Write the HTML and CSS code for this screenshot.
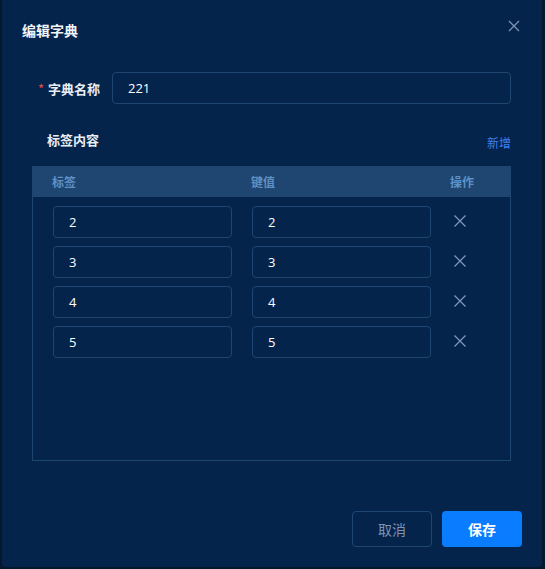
FILE: index.html
```html
<!DOCTYPE html>
<html lang="zh">
<head>
<meta charset="utf-8">
<title>编辑字典</title>
<link rel="stylesheet" href="styles.css">
</head>
<body>
<div class="backdrop">
  <div class="dialog">
    <div class="dialog-header">
      <span class="dialog-title">编辑字典</span>
      <button class="close" aria-label="关闭">
        <svg width="12" height="12" viewBox="0 0 12 12"><path d="M1 1L11 11M11 1L1 11" stroke="currentColor" stroke-width="1.2" fill="none"/></svg>
      </button>
    </div>
    <div class="dialog-body">
      <div class="form-row">
        <label class="form-label"><span class="req">*</span>字典名称</label>
        <div class="input main-input">221</div>
      </div>
      <div class="section-head">
        <span class="section-title">标签内容</span>
        <a class="add-link">新增</a>
      </div>
      <div class="table">
        <div class="table-head">
          <span>标签</span><span>键值</span><span>操作</span>
        </div>
        <div class="table-body">
          <div class="trow"><div class="input">2</div><div class="input">2</div><span class="del"><svg width="12" height="12" viewBox="0 0 12 12"><path d="M0.5 0.5L11.5 11.5M11.5 0.5L0.5 11.5" stroke="currentColor" stroke-width="1.2" fill="none"/></svg></span></div>
          <div class="trow"><div class="input">3</div><div class="input">3</div><span class="del"><svg width="12" height="12" viewBox="0 0 12 12"><path d="M0.5 0.5L11.5 11.5M11.5 0.5L0.5 11.5" stroke="currentColor" stroke-width="1.2" fill="none"/></svg></span></div>
          <div class="trow"><div class="input">4</div><div class="input">4</div><span class="del"><svg width="12" height="12" viewBox="0 0 12 12"><path d="M0.5 0.5L11.5 11.5M11.5 0.5L0.5 11.5" stroke="currentColor" stroke-width="1.2" fill="none"/></svg></span></div>
          <div class="trow"><div class="input">5</div><div class="input">5</div><span class="del"><svg width="12" height="12" viewBox="0 0 12 12"><path d="M0.5 0.5L11.5 11.5M11.5 0.5L0.5 11.5" stroke="currentColor" stroke-width="1.2" fill="none"/></svg></span></div>
        </div>
      </div>
    </div>
    <div class="dialog-footer">
      <button class="btn btn-cancel">取消</button>
      <button class="btn btn-primary">保存</button>
    </div>
  </div>
</div>
</body>
</html>
```
FILE: styles.css
```css
* { box-sizing: border-box; }
html, body {
  margin: 0;
  padding: 0;
  background: #061830;
  font-family: "Noto Sans CJK SC", "Noto Sans", sans-serif;
  color: #fff;
}
.backdrop {
  width: 545px;
  height: 569px;
  padding-left: 2px;
}
.dialog {
  width: 540px;
  height: 567px;
  background: #05244c;
  border-radius: 0 0 4px 4px;
  display: flex;
  flex-direction: column;
}
.dialog-header {
  display: flex;
  justify-content: space-between;
  align-items: center;
  padding: 20px 22px 0 20px;
  height: 40px;
}
.dialog-title {
  font-size: 14px;
  font-weight: 700;
  line-height: 20px;
  color: #f2f5fa;
}
.close {
  background: none;
  border: 0;
  padding: 0;
  color: #8297b8;
  width: 12px;
  height: 12px;
  margin-top: -8px;
  display: flex;
}
.dialog-body {
  padding: 32px 31px 0 30px;
}
.form-row {
  display: flex;
  align-items: center;
  height: 32px;
}
.form-label {
  width: 80px;
  padding-right: 12px;
  text-align: right;
  font-size: 13px;
  font-weight: 700;
  color: #e8eef6;
}
.req {
  color: #f04848;
  margin-right: 4px;
  font-weight: 400;
}
.input {
  height: 32px;
  border: 1px solid #1d4673;
  border-radius: 4px;
  padding: 0 15px;
  font-size: 13px;
  line-height: 30px;
  color: #fff;
  font-family: "Open Sans", "Noto Sans", sans-serif;
}
.main-input { flex: 1; }
.section-head {
  display: flex;
  justify-content: space-between;
  align-items: flex-start;
  margin-top: 26px;
  padding-left: 15px;
  height: 24px;
}
.section-title {
  font-size: 13px;
  font-weight: 700;
  line-height: 20px;
  color: #e8eef6;
}
.add-link {
  font-size: 12px;
  line-height: 18px;
  color: #3f7ff0;
  margin-top: 4px;
}
.table {
  margin-top: 12px;
  height: 295px;
  border: 1px solid #1d4673;
  border-top: 0;
}
.table-head {
  display: grid;
  grid-template-columns: 179px 179px auto;
  column-gap: 20px;
  height: 31px;
  align-items: center;
  background: #1e4670;
  padding-left: 20px;
  margin-left: -1px;
  margin-right: -1px;
  font-size: 12px;
  font-weight: 700;
  color: #5f91c6;
}
.table-body {
  padding: 9px 0 0 20px;
  display: flex;
  flex-direction: column;
  gap: 8px;
}
.trow {
  display: grid;
  grid-template-columns: 179px 179px auto;
  column-gap: 20px;
  align-items: center;
}
.trow .input { width: 179px; }
.del {
  color: #7f98bb;
  display: flex;
  padding-left: 3px;
  margin-top: -3px;
}
.dialog-footer {
  margin-top: auto;
  display: flex;
  justify-content: flex-end;
  gap: 10px;
  padding: 0 20px 20px 0;
}
.btn {
  width: 80px;
  height: 36px;
  border-radius: 4px;
  font-family: "Noto Sans CJK SC", sans-serif;
  font-size: 14px;
}
.btn-cancel {
  background: transparent;
  border: 1px solid #1d4673;
  color: #7e93b2;
}
.btn-primary {
  background: #0a7cff;
  border: 0;
  color: #fff;
  font-weight: 700;
}
```
